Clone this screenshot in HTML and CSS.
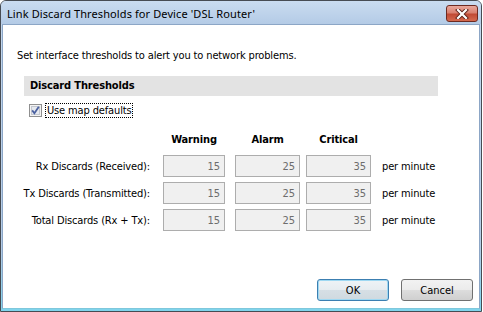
FILE: index.html
```html
<!DOCTYPE html>
<html lang="en">
<head>
    <meta charset="UTF-8">
    <title>Link Discard Thresholds</title>
    <link rel="stylesheet" href="styles.css">
</head>
<body>
    <div class="window">
        <div class="titlebar">
            <span class="title">Link Discard Thresholds for Device 'DSL Router'</span>
            <button class="close-btn" aria-label="Close">
                <svg width="14" height="10" viewBox="0 0 14 10">
                    <path d="M3 1 L11 9 M11 1 L3 9" fill="none" stroke="#5a2018" stroke-width="4" stroke-linecap="square"/>
                    <path d="M3 1 L11 9 M11 1 L3 9" fill="none" stroke="#ffffff" stroke-width="2.2" stroke-linecap="square"/>
                </svg>
            </button>
        </div>
        <div class="client">
            <p class="intro">Set interface thresholds to alert you to network problems.</p>

            <div class="section-head">Discard Thresholds</div>

            <label class="check-row">
                <span class="checkbox">
                    <svg width="13" height="13" viewBox="0 0 13 13">
                        <rect x="0.5" y="0.5" width="12" height="12" fill="#f4f4f4" stroke="#8f8f8f"/>
                        <rect x="2.5" y="2.5" width="8" height="8" fill="#e6e9ef" stroke="#c3c7cf"/>
                        <path d="M3.2 6.4 L5.4 9.2 L9.8 2.8" fill="none" stroke="#4b61a0" stroke-width="1.8"/>
                    </svg>
                </span>
                <span class="focus-label">Use map defaults</span>
            </label>

            <div class="grid">
                <span></span>
                <span class="col-head col-w1">Warning</span>
                <span class="col-head col-w2">Alarm</span>
                <span class="col-head col-w3">Critical</span>
                <span></span>

                <span class="row-label">Rx Discards (Received):</span>
                <input class="num col-w1" type="text" value="15" disabled>
                <input class="num col-w2" type="text" value="25" disabled>
                <input class="num col-w3" type="text" value="35" disabled>
                <span class="unit">per minute</span>

                <span class="row-label">Tx Discards (Transmitted):</span>
                <input class="num col-w1" type="text" value="15" disabled>
                <input class="num col-w2" type="text" value="25" disabled>
                <input class="num col-w3" type="text" value="35" disabled>
                <span class="unit">per minute</span>

                <span class="row-label">Total Discards (Rx + Tx):</span>
                <input class="num col-w1" type="text" value="15" disabled>
                <input class="num col-w2" type="text" value="25" disabled>
                <input class="num col-w3" type="text" value="35" disabled>
                <span class="unit">per minute</span>
            </div>

            <div class="buttons">
                <button class="btn btn-default">OK</button>
                <button class="btn">Cancel</button>
            </div>
        </div>
    </div>
</body>
</html>
```

FILE: styles.css
```css
body {
    margin: 0;
    padding: 0;
    background: #ffffff;
    font-family: "DejaVu Sans Condensed", "DejaVu Sans", sans-serif;
    font-size: 11px;
    letter-spacing: -0.14px;
    color: #000000;
}

.window {
    box-sizing: border-box;
    width: 482px;
    height: 312px;
    display: flex;
    flex-direction: column;
    border: 1px solid #474c53;
    border-radius: 6px 6px 0 0;
    background: linear-gradient(to bottom, #c4d8ee 0%, #b3cbe6 80%, #7fd4ec 100%);
    overflow: hidden;
}

.titlebar {
    height: 23px;
    display: flex;
    align-items: center;
    justify-content: space-between;
    padding: 0 3px 0 6px;
    background: linear-gradient(to bottom, #cadcf0, #b4cbe6);
}

.title {
    font-family: "Noto Sans", sans-serif;
    font-size: 11px;
    letter-spacing: 0.1px;
    color: #000000;
    padding-top: 1px;
}

.close-btn {
    width: 32px;
    height: 17px;
    margin-top: 2px;
    padding: 0;
    display: flex;
    align-items: center;
    justify-content: center;
    border: 1px solid #6d2a21;
    border-radius: 3px;
    background: linear-gradient(to bottom, #e9a89c 0%, #d98170 45%, #c14a34 55%, #d46a4f 100%);
}

.client {
    flex: 1;
    display: flex;
    flex-direction: column;
    margin: 0 1px 2px 1px;
    border: 1px solid #8ca6c6;
    border-bottom-color: #7fc8dc;
    background: #ffffff;
    padding: 0 0 0 14px;
}

.intro {
    margin: 24px 0 0 0;
    line-height: 14px;
}

.section-head {
    margin: 13px 0 0 7px;
    width: 408px;
    height: 20px;
    line-height: 20px;
    padding-left: 6px;
    background: #e3e3e3;
    font-weight: bold;
}

.check-row {
    display: flex;
    align-items: center;
    gap: 3px;
    margin: 7px 0 0 12px;
    height: 15px;
}

.checkbox {
    display: flex;
    width: 13px;
    height: 13px;
}

.focus-label {
    border: 1px dotted #000000;
    padding: 0 0 0 1px;
    line-height: 13px;
}

.grid {
    display: grid;
    grid-template-columns: 133px 75px 75px 71px auto;
    grid-template-rows: 16px 22px 22px 22px;
    row-gap: 5px;
    margin-top: 16px;
    align-items: center;
}

.col-head {
    align-self: start;
    justify-self: end;
    line-height: 11px;
    text-align: center;
    font-weight: bold;
}

.col-w1 { width: 62px; }
.col-w2 { width: 65px; }
.col-w3 { width: 65px; }

.row-label {
    text-align: right;
}

.num {
    justify-self: end;
    box-sizing: border-box;
    height: 22px;
    margin: 0;
    padding: 0 4px 0 0;
    border: 1px solid #adadad;
    background: #f0f0f0;
    color: #6d6d6d;
    font-family: inherit;
    font-size: 11px;
    text-align: right;
}

.unit {
    padding-left: 11px;
}

.buttons {
    margin-top: auto;
    display: flex;
    justify-content: flex-end;
    gap: 12px;
    padding: 0 6px 7px 0;
}

.btn {
    box-sizing: border-box;
    width: 72px;
    height: 22px;
    padding: 0;
    border: 1px solid #707070;
    border-radius: 3px;
    background: linear-gradient(to bottom, #f2f2f2 0%, #ebebeb 50%, #dddddd 51%, #cfcfcf 100%);
    font-family: inherit;
    font-size: 11px;
    color: #000000;
}

.btn-default {
    border-color: #3c7fb1;
    box-shadow: inset 0 0 0 1px #9ed8f2;
    background: linear-gradient(to bottom, #eef3f6 0%, #e6ecf0 50%, #d6dfe5 51%, #cfd9df 100%);
}
```
